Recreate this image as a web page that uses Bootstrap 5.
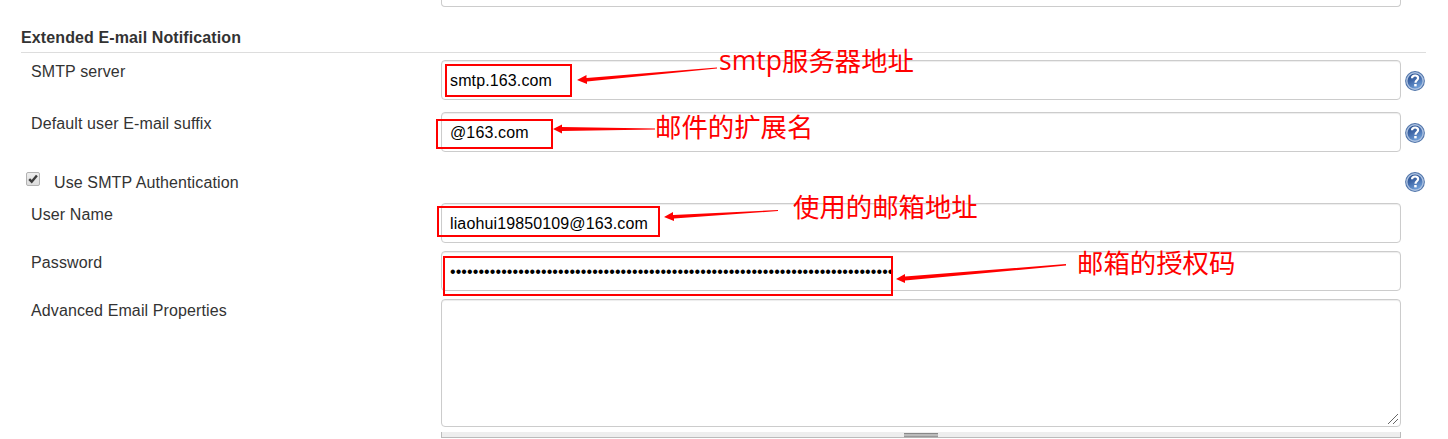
<!DOCTYPE html>
<html lang="en">
<head>
<meta charset="utf-8">
<meta name="viewport" content="width=device-width, initial-scale=1">
<title>Extended E-mail Notification</title>
<link href="https://cdn.jsdelivr.net/npm/bootstrap@5.3.0/dist/css/bootstrap.min.css" rel="stylesheet">
<style>
body { font: 16px/22px "Liberation Sans", Arial, sans-serif; letter-spacing: .115px; color: #333; background: #fff; overflow: hidden; height: 439px; }
.config { width: 1405px; margin-left: 21px; }
.prev-field { height: 7px; margin-left: 420px; width: 960px; border: 1px solid #ccc; border-top: 0; border-radius: 0 0 4px 4px; }
.section-title { font: bold 16px/22px "Liberation Sans", Arial, sans-serif; margin: 20px 0 7px; border-bottom: 1px solid #ddd; height: 26px; }
.field-label { width: 420px; padding: 1px 0 0 10px; flex: none; }
.field { width: 960px; flex: none; }
.field.form-control { height: 40px; padding: 2px 8px 0; font: 16px/22px "Liberation Sans", Arial, sans-serif; letter-spacing: .125px; color: #000; border: 1px solid #ccc; border-radius: 4px; box-shadow: inset 0 1px 1px rgba(0,0,0,.075); }
textarea.field.form-control { height: 128px; resize: none; display: block; }
.field.form-control.secret { letter-spacing: .085px; }
.help { margin-left: 4px; width: 20px; height: 20px; flex: none; position: relative; top: 1px; }
.gap-row { margin-bottom: 12px; }
.check-row { height: 31px; padding-top: 6px; }
.check-row .help { margin-right: 1px; top: 2px; }
.check-text { padding-top: 2px; }
.tick { width: 14px; height: 14px; margin: 2px 14px 0 5px; flex: none; }
.corner { right: 2px; bottom: 2px; width: 12px; height: 12px; }
.drag-bar { height: 6px; width: 960px; margin: 5px 0 0 420px; background: #eee; border: solid #bbb; border-width: 0 1px 1px; }
.drag-grip { width: 34px; height: 5px; position: relative; top: 1px; background: linear-gradient(#888 1px, #bbb 1px 3px, #999 3px 4px, #b4b4b4 4px); }
.notes { left: 0; top: 0; width: 1448px; height: 439px; pointer-events: none; }
.notes text { font: 400 26.4px "Open Sans", "Noto Sans CJK SC", sans-serif; fill: #f00; letter-spacing: 0; }
.notes .cjk { font-family: "Noto Sans CJK SC", sans-serif; }
</style>
</head>
<body class="position-relative">
<svg width="0" height="0" class="position-absolute" aria-hidden="true">
  <defs>
    <linearGradient id="ball" x1="0" y1="0" x2="0.5" y2="1"><stop offset="0" stop-color="#244a88"/><stop offset=".5" stop-color="#4068a8"/><stop offset="1" stop-color="#6c9bd5"/></linearGradient>
    <symbol id="help" viewBox="0 0 20 20">
      <circle cx="10" cy="10" r="9.9" fill="#4e73a9"/>
      <circle cx="10" cy="10" r="8.9" fill="#adc2e1"/>
      <circle cx="10" cy="10" r="7.5" fill="url(#ball)"/>
      <path d="M7 7.2C7.1 5.2 8.3 4.5 10.1 4.5c1.8 0 3 1 3 2.6 0 2.2-2.6 2.2-2.6 4.6" fill="none" stroke="#fff" stroke-width="2.2"/>
      <rect x="9.2" y="13" width="2.5" height="2.4" fill="#fff"/>
    </symbol>
  </defs>
</svg>
<main class="config">
  <div class="prev-field"></div>
  <h2 class="section-title">Extended E-mail Notification</h2>
  <div class="d-flex gap-row">
    <label class="field-label" for="smtp">SMTP server</label>
    <input id="smtp" class="form-control field" value="smtp.163.com">
    <svg class="help align-self-center"><use href="#help"/></svg>
  </div>
  <div class="d-flex gap-row">
    <label class="field-label" for="suffix">Default user E-mail suffix</label>
    <input id="suffix" class="form-control field" value="@163.com">
    <svg class="help align-self-center"><use href="#help"/></svg>
  </div>
  <div class="d-flex check-row mb-2">
    <svg class="tick" viewBox="0 0 14 14">
      <defs><linearGradient id="face" x1="0" y1="0" x2="0" y2="1"><stop stop-color="#eee"/><stop offset="1" stop-color="#dcdcdc"/></linearGradient></defs>
      <rect x=".5" y=".5" width="13" height="13" rx="1.5" fill="url(#face)" stroke="#b2b2b2"/>
      <path d="M3.2 7.2l2.5 2.5 5.2-6.2" fill="none" stroke="#3c3c3c" stroke-width="2.4"/>
    </svg>
    <span class="check-text">Use SMTP Authentication</span>
    <svg class="help ms-auto"><use href="#help"/></svg>
  </div>
  <div class="d-flex mb-2">
    <label class="field-label" for="user">User Name</label>
    <input id="user" class="form-control field" value="liaohui19850109@163.com">
  </div>
  <div class="d-flex mb-2">
    <label class="field-label" for="pass">Password</label>
    <input id="pass" class="form-control field secret" value="••••••••••••••••••••••••••••••••••••••••••••••••••••••••••••••••••••••••••••••">
  </div>
  <div class="d-flex">
    <label class="field-label" for="props">Advanced Email Properties</label>
    <div class="position-relative">
      <textarea id="props" class="form-control field"></textarea>
      <svg class="corner position-absolute" viewBox="0 0 12 12" shape-rendering="crispEdges"><path d="M1 11L11 1M6 11l5-5" stroke="#666"/></svg>
    </div>
  </div>
  <div class="drag-bar"><div class="drag-grip mx-auto"></div></div>
</main>
<svg class="notes position-absolute" viewBox="0 0 1448 439">
  <g fill="none" stroke="#f00" stroke-width="2">
    <rect x="446" y="65" width="125" height="31"/>
    <rect x="437" y="120" width="115" height="28"/>
    <rect x="438" y="207" width="221" height="29"/>
    <rect x="444" y="257" width="448" height="38"/>
  </g>
  <g fill="#f00">
    <path d="M577 80L586.500 75V78L717 67.500V68.500L587 81.500V84Z"/>
    <path d="M553 129L562 124.500V127L655 128.500V129.500L562 131V133.500Z"/>
    <path d="M664 217L673 212V215L778 210V211L674 218.500V221Z"/>
    <path d="M896 279L905 274V276.500L1066 264V265.500L905 280.500V283Z"/>
  </g>
  <text x="719" y="70" textLength="63" lengthAdjust="spacingAndGlyphs">smtp</text>
  <text class="cjk" x="782" y="71">服务器地址</text>
  <text class="cjk" x="655" y="137">邮件的扩展名</text>
  <text class="cjk" x="793" y="217">使用的邮箱地址</text>
  <text class="cjk" x="1077" y="273">邮箱的授权码</text>
</svg>
<script src="https://cdn.jsdelivr.net/npm/bootstrap@5.3.0/dist/js/bootstrap.bundle.min.js"></script>
</body>
</html>
